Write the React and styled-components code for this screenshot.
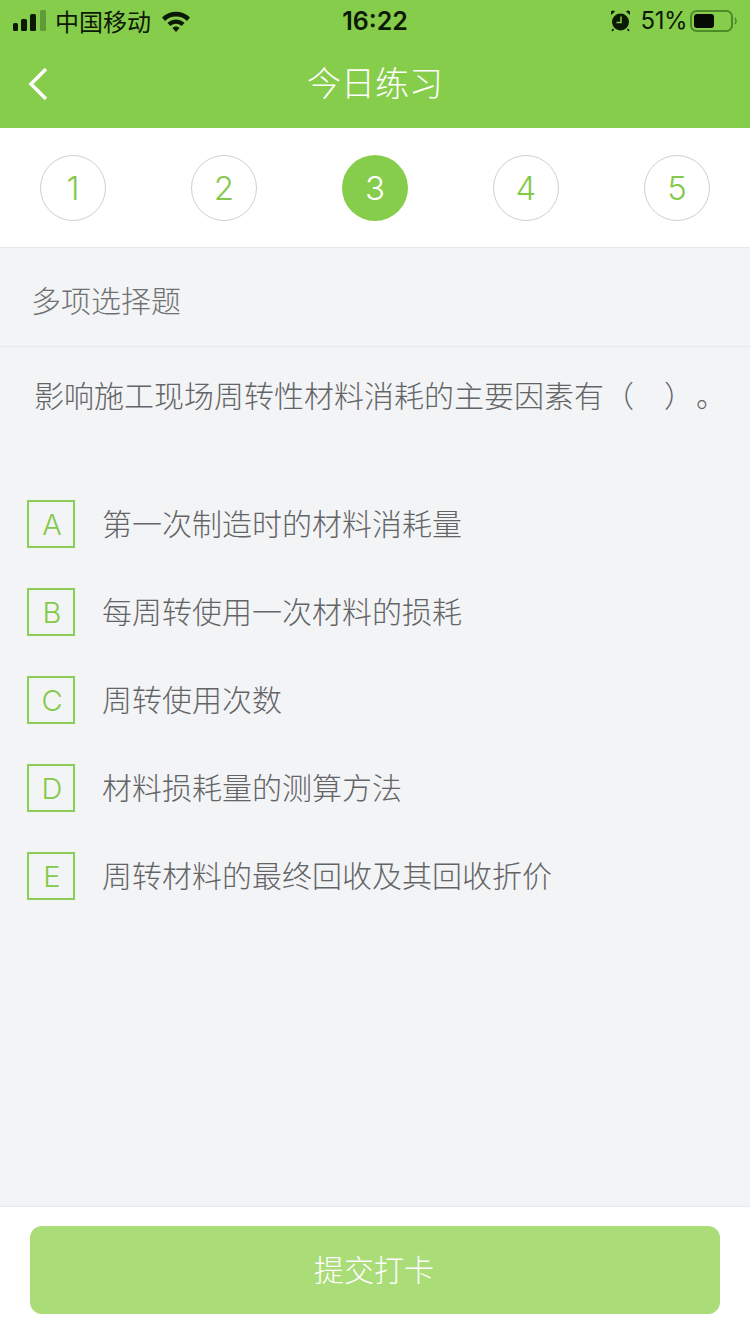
import React from 'react';
import styled, { createGlobalStyle } from 'styled-components';

const GlobalStyle = createGlobalStyle`
  html, body {
    margin: 0;
    padding: 0;
    background: #f3f4f6;
  }
  body {
    font-family: "Liberation Sans", "Noto Sans CJK SC", sans-serif;
  }
  * {
    box-sizing: border-box;
  }
`;

const Page = styled.div`
  width: 750px;
  height: 1334px;
  display: flex;
  flex-direction: column;
  overflow: hidden;
  background: #f3f4f6;
`;

const Top = styled.header`
  height: 128px;
  flex: none;
  background: #87cd4c;
  display: flex;
  flex-direction: column;
`;

const StatusBar = styled.div`
  height: 41px;
  padding: 0 13px;
  display: grid;
  grid-template-columns: 1fr auto 1fr;
  align-items: center;
  color: #0c1a05;
`;

const StatusLeft = styled.div`
  display: flex;
  align-items: center;
`;

const StatusRight = styled.div`
  display: flex;
  align-items: center;
  justify-content: flex-end;
`;

const Carrier = styled.span`
  font-family: "Noto Sans CJK SC", sans-serif;
  font-size: 24px;
  margin-left: 9px;
  margin-right: 10px;
`;

const Clock = styled.span`
  font-family: Inter, sans-serif;
  font-size: 25px;
  font-weight: 600;
`;

const Percent = styled.span`
  font-family: Inter, sans-serif;
  font-size: 24px;
  margin: 0 3px 0 10px;
  letter-spacing: -0.5px;
`;

const NavBar = styled.div`
  flex: 1;
  display: flex;
  align-items: center;
  justify-content: center;
  position: relative;
  padding-bottom: 6px;
`;

const Back = styled.svg`
  position: absolute;
  left: 28px;
  top: 26px;
`;

const Title = styled.h1`
  margin: 0;
  font-family: "Noto Sans CJK SC", sans-serif;
  font-weight: 300;
  font-size: 34px;
  color: #fff;
`;

const Steps = styled.nav`
  flex: none;
  height: 120px;
  padding: 27px 40px 0;
  display: flex;
  justify-content: space-between;
  align-items: flex-start;
  background: #fff;
  border-bottom: 1px solid #e6e6e6;
`;

const Step = styled.div`
  width: 66px;
  height: 66px;
  border-radius: 50%;
  display: flex;
  align-items: center;
  justify-content: center;
  font-family: Inter, sans-serif;
  font-weight: 350;
  font-size: 33px;
  color: ${(p) => (p.$active ? '#fff' : '#84c94c')};
  background: ${(p) => (p.$active ? '#87cd4c' : '#fff')};
  border: ${(p) => (p.$active ? 'none' : '1px solid #cfcfcf')};
`;

const Kind = styled.div`
  flex: none;
  height: 99px;
  padding: 4px 0 0 31px;
  display: flex;
  align-items: center;
  border-bottom: 1px solid #e6e7e9;
  font-family: "Noto Sans CJK SC", sans-serif;
  font-weight: 300;
  font-size: 30px;
  color: #707173;
`;

const Main = styled.main`
  flex: 1;
  padding: 24px 0 0 27px;
`;

const Question = styled.p`
  margin: 0 0 83px 7px;
  height: 46px;
  line-height: 46px;
  white-space: nowrap;
  font-family: "Noto Sans CJK SC", sans-serif;
  font-weight: 300;
  font-size: 30px;
  color: #636466;
`;

const Stop = styled.span`
  margin-left: 17px;
`;

const Options = styled.ul`
  list-style: none;
  margin: 0;
  padding: 0;
  display: flex;
  flex-direction: column;
  gap: 40px;
`;

const Option = styled.li`
  display: flex;
  align-items: center;
  gap: 27px;
  height: 48px;
`;

const Letter = styled.span`
  width: 48px;
  height: 48px;
  flex: none;
  display: flex;
  align-items: center;
  justify-content: center;
  padding-left: 2px;
  border: 2px solid #8bcd55;
  font-family: Inter, sans-serif;
  font-weight: 350;
  font-size: 29px;
  color: #84c94c;
`;

const OptionText = styled.span`
  padding-bottom: 4px;
  font-family: "Noto Sans CJK SC", sans-serif;
  font-weight: 300;
  font-size: 30px;
  color: #636466;
`;

const Footer = styled.footer`
  flex: none;
  height: 128px;
  padding: 19px 30px 0;
  background: #fff;
  border-top: 1px solid #e8e9eb;
`;

const Submit = styled.button`
  width: 100%;
  height: 88px;
  border: none;
  border-radius: 12px;
  background: #aadc78;
  color: #fff;
  font-family: "Noto Sans CJK SC", sans-serif;
  font-weight: 300;
  font-size: 30px;
  padding: 0 2px 4px 0;
`;

const Signal = () => (
  <svg width="33" height="22" viewBox="0 0 33 22">
    <rect x="0" y="13" width="5" height="8" rx="1.500" fill="#0c1a05" />
    <rect x="8" y="9" width="6" height="12" rx="1.500" fill="#0c1a05" />
    <rect x="17" y="4" width="6" height="17" rx="1.500" fill="#0c1a05" />
    <rect x="27" y="0" width="6" height="21" rx="1.500" fill="#5f9a38" />
  </svg>
);

const Wifi = () => (
  <svg width="30" height="22" viewBox="0 0 30 22">
    <path d="M1 7.500 A20 20 0 0 1 29 7.500 L26 11 A16 16 0 0 0 4 11 Z" fill="#0c1a05" />
    <path d="M6.500 13 A12 12 0 0 1 23.500 13 L20.500 16 A8 8 0 0 0 9.500 16 Z" fill="#0c1a05" />
    <path d="M11.500 18 A5 5 0 0 1 18.500 18 L15 22 Z" fill="#0c1a05" />
  </svg>
);

const Alarm = () => (
  <svg width="21" height="22" viewBox="0 0 21 22">
    <circle cx="10.500" cy="12" r="8.500" fill="#0c1a05" />
    <path d="M1 5 L5 1.500 A3 3 0 0 0 1 1.500 Z M20 5 L16 1.500 A3 3 0 0 1 20 1.500 Z" fill="#0c1a05" />
    <path d="M3.500 19 L2 21 M17.500 19 L19 21" stroke="#0c1a05" strokeWidth="1.500" />
    <path d="M11 6.500 V12.500 H6.500" fill="none" stroke="#87cd4c" strokeWidth="1.500" />
  </svg>
);

const Battery = () => (
  <svg width="47" height="22" viewBox="0 0 47 22">
    <rect x="1" y="1" width="41" height="20" rx="5.500" fill="none" stroke="#4d8a2a" strokeWidth="2" />
    <rect x="4" y="4" width="20" height="14" rx="3" fill="#050a02" />
    <path d="M45 8 Q47 11 45 14" fill="none" stroke="#4d8a2a" strokeWidth="1.500" />
  </svg>
);

const steps = [1, 2, 3, 4, 5];

const options = [
  ['A', '第一次制造时的材料消耗量'],
  ['B', '每周转使用一次材料的损耗'],
  ['C', '周转使用次数'],
  ['D', '材料损耗量的测算方法'],
  ['E', '周转材料的最终回收及其回收折价'],
];

export default function App() {
  return (
    <Page>
      <GlobalStyle />
      <Top>
        <StatusBar>
          <StatusLeft>
            <Signal />
            <Carrier>中国移动</Carrier>
            <Wifi />
          </StatusLeft>
          <Clock>16:22</Clock>
          <StatusRight>
            <Alarm />
            <Percent>51%</Percent>
            <Battery />
          </StatusRight>
        </StatusBar>
        <NavBar>
          <Back width="22" height="34" viewBox="0 0 22 34">
            <path d="M18 2 L3 17 L18 32" fill="none" stroke="#fff" strokeWidth="3.500" />
          </Back>
          <Title>今日练习</Title>
        </NavBar>
      </Top>
      <Steps>
        {steps.map((n) => (
          <Step key={n} $active={n === 3}>{n}</Step>
        ))}
      </Steps>
      <Kind>多项选择题</Kind>
      <Main>
        <Question>影响施工现场周转性材料消耗的主要因素有（　）<Stop>。</Stop></Question>
        <Options>
          {options.map(([key, text]) => (
            <Option key={key}>
              <Letter>{key}</Letter>
              <OptionText>{text}</OptionText>
            </Option>
          ))}
        </Options>
      </Main>
      <Footer>
        <Submit>提交打卡</Submit>
      </Footer>
    </Page>
  );
}
